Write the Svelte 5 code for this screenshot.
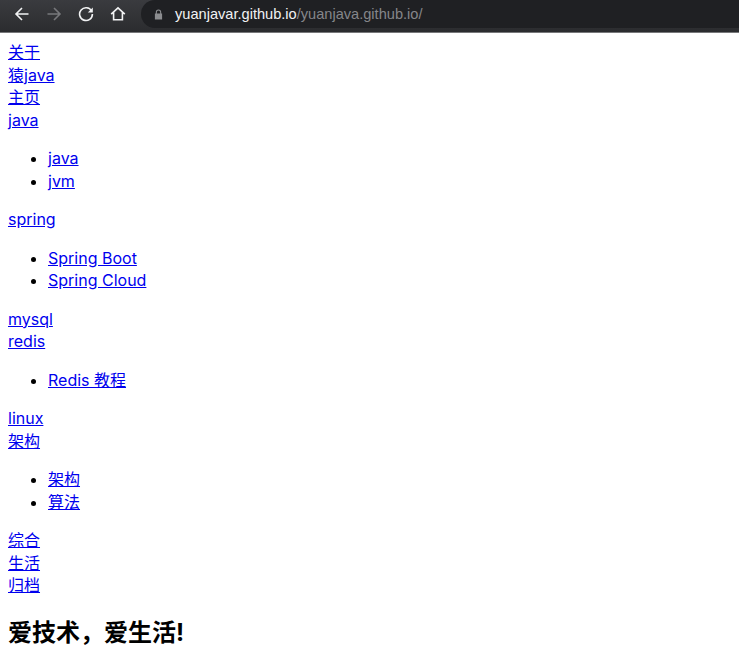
<script>
  const menu = [
    { label: '关于' },
    { label: '猿java' },
    { label: '主页' },
    { label: 'java', children: ['java', 'jvm'] },
    { label: 'spring', children: ['Spring Boot', 'Spring Cloud'] },
    { label: 'mysql' },
    { label: 'redis', children: ['Redis 教程'] },
    { label: 'linux' },
    { label: '架构', children: ['架构', '算法'] },
    { label: '综合' },
    { label: '生活' },
    { label: '归档' }
  ]
</script>

<header class="toolbar">
  <svg class="icon" viewBox="0 0 16 16" aria-hidden="true">
    <path d="M14.5 8H2.200M8 2 2 8l6 6" />
  </svg>
  <svg class="icon dim" viewBox="0 0 16 16" aria-hidden="true">
    <path d="M1.500 8h12.300M8 2l6 6-6 6" />
  </svg>
  <svg class="icon" viewBox="0 0 16 16" aria-hidden="true">
    <path d="M13.600 5A6.400 6.400 0 1 0 14.400 8" />
    <path class="solid" d="M14.800 1.400v5h-5z" />
  </svg>
  <svg class="icon" viewBox="0 0 16 16" aria-hidden="true">
    <path d="M1.200 8.200 8 1.800l6.800 6.400M3.600 6.600v7.200h8.800V6.600" />
  </svg>
  <div class="address">
    <svg class="lock" viewBox="0 0 10 12" aria-hidden="true">
      <path d="M1 5h1V3.400a3 3 0 0 1 6 0V5h1v6.500H1zM3.200 5h3.600V3.400a1.800 1.800 0 0 0-3.600 0z" />
    </svg>
    <span class="url"><span class="host">yuanjavar.github.io</span>/yuanjava.github.io/</span>
  </div>
</header>

<main>
  <nav>
    {#each menu as item}
      <div><a href="#top">{item.label}</a></div>
      {#if item.children}
        <ul>
          {#each item.children as child}
            <li><a href="#top">{child}</a></li>
          {/each}
        </ul>
      {/if}
    {/each}
  </nav>
  <h1>爱技术，爱生活!</h1>
</main>

<style>
  :global(body) {
    background: #fff;
    overflow: hidden;
  }

  .toolbar {
    display: flex;
    align-items: center;
    height: 32px;
    padding-left: 14px;
    background: linear-gradient(#3a3b3f, #2b2c2f);
    border-bottom: 1px solid #77787a;
  }
  .icon {
    width: 16px;
    height: 16px;
    margin-right: 16px;
    flex: none;
    margin-top: -4px;
  }
  .icon path {
    fill: none;
    stroke: #f1f2f3;
    stroke-width: 1.6;
  }
  .icon path.solid {
    fill: #f1f2f3;
    stroke: none;
  }
  .icon.dim path {
    stroke: #77787b;
  }
  .address {
    display: flex;
    align-items: center;
    flex: 1;
    height: 28px;
    margin-left: -1px;
    margin-top: -4px;
    padding-left: 13px;
    background: #1f2023;
    border-radius: 14px 0 0 14px;
  }
  .lock {
    width: 9px;
    height: 11px;
    margin-right: 12px;
  }
  .lock path {
    fill: #8b8c8f;
    fill-rule: evenodd;
  }
  .url {
    font: 14.6px "Liberation Sans", sans-serif;
    color: #85868a;
  }
  .host {
    color: #f1f2f3;
  }

  main {
    padding: 8px 8px 0;
    font: 16px/22.5px "Inter", "Noto Sans CJK SC", sans-serif;
    color: #000;
  }
  a {
    color: #0000ee;
    text-decoration: underline;
  }
  ul {
    margin: 16px 0;
    padding-left: 40px;
  }
  h1 {
    margin: 19px 0 0;
    font-size: 24px;
    line-height: 34px;
    font-weight: 700;
  }
</style>
